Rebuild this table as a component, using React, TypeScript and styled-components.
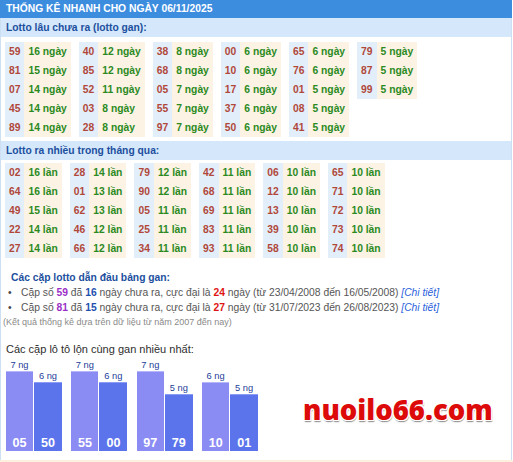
import React from "react";
import styled, { createGlobalStyle } from "styled-components";

const GlobalStyle = createGlobalStyle`
  html, body { margin: 0; padding: 0; background: #ffffff; }
  body { font-family: "Liberation Sans", Arial, sans-serif; }
`;

const Page = styled.div`
  width: 513px;
  height: 462px;
  display: flex;
  flex-direction: column;
  overflow: hidden;
`;

const Panel = styled.div`
  width: 510px;
  height: 460px;
  border-left: 1px solid #cddff2;
  border-right: 1px solid #cddff2;
  display: flex;
  flex-direction: column;
  position: relative;
`;

const Header = styled.div`
  height: 18px;
  line-height: 18px;
  margin-left: -1px;
  margin-right: -1px;
  padding-left: 6px;
  background: #3d8ddf;
  color: #ffffff;
  font-weight: bold;
  font-size: 10.3px;
`;

const SectionBar = styled.div<{ $mt?: number }>`
  height: 19px;
  line-height: 19px;
  margin-top: ${(p) => p.$mt ?? 0}px;
  padding-left: 5px;
  background: #d5e8fb;
  color: #1d4f9e;
  font-weight: bold;
  font-size: 10.3px;
`;

const Grid = styled.div<{ $mt: number }>`
  display: flex;
  gap: 8px;
  margin-top: ${(p) => p.$mt}px;
  padding-left: 4px;
`;

const Group = styled.div`
  display: grid;
  grid-template-columns: auto auto;
  grid-auto-rows: 19px;
  align-content: start;
`;

const NumCell = styled.div`
  background: #e3eefb;
  color: #b0483a;
  font-weight: bold;
  font-size: 10.3px;
  line-height: 19px;
  padding: 0 4px;
`;

const ValCell = styled.div`
  background: #fdf3e4;
  color: #2b8a1f;
  font-weight: bold;
  font-size: 10.3px;
  line-height: 19px;
  padding: 0 4px;
  white-space: nowrap;
`;

const Leaders = styled.div`
  margin-top: 12px;
  padding-left: 2px;
`;

const LeadersTitle = styled.div`
  padding-left: 8px;
  color: #1d4f9e;
  font-weight: bold;
  font-size: 10.3px;
  line-height: 15px;
`;

const Bullet = styled.div`
  display: flex;
  font-size: 10.3px;
  line-height: 15px;
  color: #555555;
  white-space: nowrap;
`;

const Dot = styled.span`
  width: 18px;
  padding-left: 5px;
  box-sizing: border-box;
  color: #444;
`;

const Em = styled.b<{ $c: string }>`
  color: ${(p) => p.$c};
`;

const Link = styled.i`
  color: #2a5fdb;
`;

const Note = styled.div`
  font-size: 9px;
  line-height: 14px;
  color: #8a8a8a;
`;

const ChartSection = styled.div`
  margin-top: 13px;
  padding-left: 5px;
`;

const ChartTitle = styled.div`
  font-size: 11px;
  line-height: 14px;
  color: #2e2e2e;
`;

const Chart = styled.div`
  display: flex;
  align-items: flex-end;
  gap: 9.4px;
  height: 93px;
  margin-top: 2px;
`;

const Pair = styled.div`
  display: flex;
  align-items: flex-end;
  gap: 1px;
`;

const BarCol = styled.div<{ $w: number }>`
  width: ${(p) => p.$w}px;
  display: flex;
  flex-direction: column;
  align-items: center;
`;

const BarValue = styled.div`
  font-size: 9.3px;
  line-height: 11px;
  color: #24409a;
`;

const Bar = styled.div<{ $light: boolean }>`
  width: 100%;
  background: ${(p) => (p.$light ? "#8b8bf4" : "#5b74eb")};
  border-top: 1px solid ${(p) => (p.$light ? "#b5b5fa" : "#8a9cf3")};
  display: flex;
  align-items: flex-end;
  justify-content: center;
  box-sizing: border-box;
`;

const BarLabel = styled.div`
  color: #ffffff;
  font-weight: bold;
  font-size: 12.6px;
  line-height: 14px;
  padding-bottom: 1px;
`;

const Watermark = styled.div`
  position: absolute;
  left: 302px;
  top: 394px;
  font-family: "Open Sans", sans-serif;
  font-weight: 800;
  font-size: 27.5px;
  line-height: 32px;
  color: #dd0a0a;
  text-shadow: 1px 0 0 #fff, -1px 0 0 #fff, 0 1px 0 #fff, 0 -1px 0 #fff,
    1px 1px 0 #fff, -1px 1px 0 #fff, 1px -1px 0 #fff, -1px -1px 0 #fff,
    0 2px 1px #9a9a9a, 1px 2px 1px #9a9a9a;
`;

const BottomStrip = styled.div`
  height: 2px;
  background: #fcf1df;
`;

type Entry = [string, number];

const gan: Entry[][] = [
  [["59", 16], ["81", 15], ["07", 14], ["45", 14], ["89", 14]],
  [["40", 12], ["85", 12], ["52", 11], ["03", 8], ["28", 8]],
  [["38", 8], ["68", 8], ["05", 7], ["55", 7], ["97", 7]],
  [["00", 6], ["10", 6], ["17", 6], ["37", 6], ["50", 6]],
  [["65", 6], ["76", 6], ["01", 5], ["08", 5], ["41", 5]],
  [["79", 5], ["87", 5], ["99", 5]],
];

const nhieu: Entry[][] = [
  [["02", 16], ["64", 16], ["49", 15], ["22", 14], ["27", 14]],
  [["28", 14], ["01", 13], ["62", 13], ["46", 12], ["66", 12]],
  [["79", 12], ["90", 12], ["05", 11], ["25", 11], ["34", 11]],
  [["42", 11], ["68", 11], ["69", 11], ["83", 11], ["93", 11]],
  [["06", 10], ["12", 10], ["13", 10], ["39", 10], ["58", 10]],
  [["65", 10], ["71", 10], ["72", 10], ["73", 10], ["74", 10]],
];

const pairs: [Entry, Entry][] = [
  [["05", 7], ["50", 6]],
  [["55", 7], ["00", 6]],
  [["97", 7], ["79", 5]],
  [["10", 6], ["01", 5]],
];

const barHeight = (n: number) => Math.round(n * 11.45);

function NumGrid({ data, unit, mt }: { data: Entry[][]; unit: string; mt: number }) {
  return (
    <Grid $mt={mt}>
      {data.map((g, gi) => (
        <Group key={gi}>
          {g.map(([n, v], i) => (
            <React.Fragment key={i}>
              <NumCell>{n}</NumCell>
              <ValCell>
                {v} {unit}
              </ValCell>
            </React.Fragment>
          ))}
        </Group>
      ))}
    </Grid>
  );
}

export default function App() {
  return (
    <>
      <GlobalStyle />
      <Page>
        <Panel>
          <Header>THỐNG KÊ NHANH CHO NGÀY 06/11/2025</Header>
          <SectionBar>Lotto lâu chưa ra (lotto gan):</SectionBar>
          <NumGrid data={gan} unit="ngày" mt={5} />
          <SectionBar $mt={4}>Lotto ra nhiều trong tháng qua:</SectionBar>
          <NumGrid data={nhieu} unit="lần" mt={3} />
          <Leaders>
            <LeadersTitle>Các cặp lotto dẫn đầu bảng gan:</LeadersTitle>
            <Bullet>
              <Dot>•</Dot>
              <span>
                Cặp số <Em $c="#9a2fc6">59</Em> đã <Em $c="#1d4fae">16</Em> ngày chưa ra, cực đại là{" "}
                <Em $c="#e01313">24</Em> ngày (từ 23/04/2008 đến 16/05/2008) <Link>[Chi tiết]</Link>
              </span>
            </Bullet>
            <Bullet>
              <Dot>•</Dot>
              <span>
                Cặp số <Em $c="#9a2fc6">81</Em> đã <Em $c="#1d4fae">15</Em> ngày chưa ra, cực đại là{" "}
                <Em $c="#e01313">27</Em> ngày (từ 31/07/2023 đến 26/08/2023) <Link>[Chi tiết]</Link>
              </span>
            </Bullet>
            <Note>(Kết quả thống kê dựa trên dữ liệu từ năm 2007 đến nay)</Note>
          </Leaders>
          <ChartSection>
            <ChartTitle>Các cặp lô tô lộn cùng gan nhiều nhất:</ChartTitle>
            <Chart>
              {pairs.map((p, pi) => (
                <Pair key={pi}>
                  {p.map(([n, v], i) => (
                    <BarCol key={i} $w={i === 0 ? 27 : 28}>
                      <BarValue>{v} ng</BarValue>
                      <Bar $light={i === 0} style={{ height: barHeight(v) }}>
                        <BarLabel>{n}</BarLabel>
                      </Bar>
                    </BarCol>
                  ))}
                </Pair>
              ))}
            </Chart>
          </ChartSection>
          <Watermark>nuoilo66.com</Watermark>
        </Panel>
        <BottomStrip />
      </Page>
    </>
  );
}
